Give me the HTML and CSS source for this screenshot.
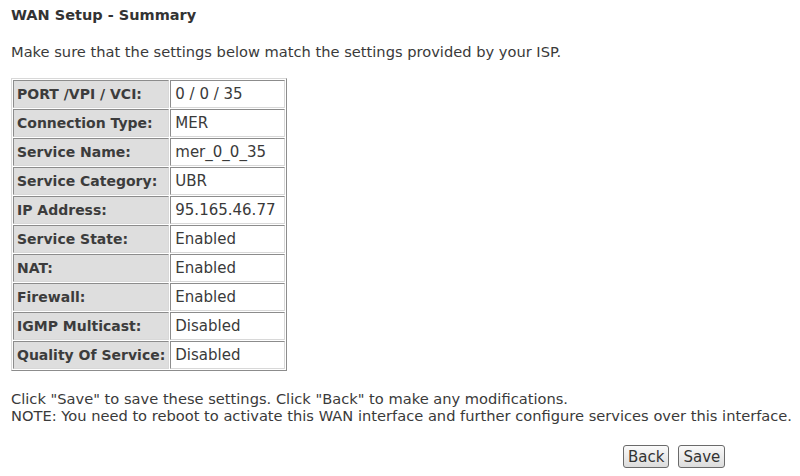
FILE: index.html
```html
<!DOCTYPE html>
<html>
<head>
<meta charset="utf-8">
<link rel="stylesheet" href="styles.css">
</head>
<body>
<div class="page">
  <h1 class="title">WAN Setup - Summary</h1>
  <p class="intro">Make sure that the settings below match the settings provided by your ISP.</p>
  <table class="summary">
    <tr><td class="label">PORT /VPI / VCI:</td><td class="value">0 / 0 / 35</td></tr>
    <tr><td class="label">Connection Type:</td><td class="value">MER</td></tr>
    <tr><td class="label">Service Name:</td><td class="value">mer_0_0_35</td></tr>
    <tr><td class="label">Service Category:</td><td class="value">UBR</td></tr>
    <tr><td class="label">IP Address:</td><td class="value">95.165.46.77</td></tr>
    <tr><td class="label">Service State:</td><td class="value">Enabled</td></tr>
    <tr><td class="label">NAT:</td><td class="value">Enabled</td></tr>
    <tr><td class="label">Firewall:</td><td class="value">Enabled</td></tr>
    <tr><td class="label">IGMP Multicast:</td><td class="value">Disabled</td></tr>
    <tr><td class="label">Quality Of Service:</td><td class="value">Disabled</td></tr>
  </table>
  <p class="note">Click "Save" to save these settings. Click "Back" to make any modifications.<br>NOTE: You need to reboot to activate this WAN interface and further configure services over this interface.</p>
  <div class="actions">
    <button class="btn">Back</button>
    <button class="btn">Save</button>
  </div>
</div>
</body>
</html>
```
FILE: styles.css
```css
html, body {
  margin: 0;
  padding: 0;
  background: #ffffff;
}
.page {
  padding: 6px 0 0 11px;
  font-family: "DejaVu Sans", Tahoma, sans-serif;
  font-size: 14.65px;
  color: #3a3a3a;
}
.title {
  margin: 0;
  font-size: 14.5px;
  font-weight: bold;
  line-height: 18px;
  color: #333;
}
.intro {
  margin: 19px 0 0 0;
  line-height: 18px;
}
.summary {
  margin-top: 17px;
  border-collapse: separate;
  border-spacing: 1px;
  border: 1px solid;
  border-color: #d8d8d8 #8c8c8c #8c8c8c #d8d8d8;
}
.summary td {
  height: 26px;
  padding: 0 3px;
  border: 1px solid;
  border-color: #8c8c8c #d8d8d8 #d8d8d8 #8c8c8c;
  white-space: nowrap;
}
.summary .label {
  width: 147px;
  background: #dedede;
  font-weight: bold;
  font-size: 14px;
  color: #3c3c3c;
}
.summary .value {
  width: 107px;
  padding-left: 4px;
  padding-right: 2px;
  background: #ffffff;
  font-size: 15px;
}
.note {
  margin: 19px 0 0 0;
  line-height: 17px;
}
.actions {
  display: flex;
  gap: 9px;
  margin: 21px 0 0 612px;
}
.btn {
  font-family: "DejaVu Sans", Tahoma, sans-serif;
  font-size: 15px;
  color: #333;
  height: 23px;
  padding: 0 4px;
  border: 1px solid #6a6a6a;
  border-radius: 3px;
  background: linear-gradient(#fafafa, #dcdcdc);
}
```
